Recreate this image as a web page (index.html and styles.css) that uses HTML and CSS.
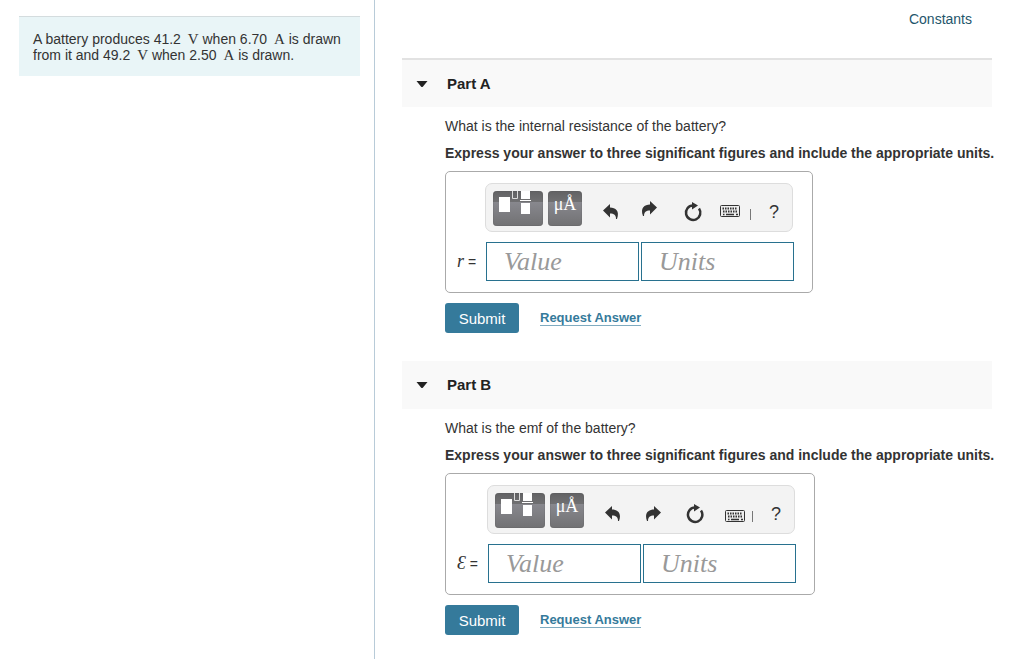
FILE: index.html
```html
<!DOCTYPE html>
<html lang="en">
<head>
  <meta charset="UTF-8">
  <title>Battery Problem</title>
  <link rel="stylesheet" href="styles.css">
</head>
<body>

  <aside class="sidebar">
    <div class="problem">
      A battery produces 41.2 <span class="unit">V</span> when 6.70 <span class="unit">A</span> is drawn from it and 49.2 <span class="unit">V</span> when 2.50 <span class="unit">A</span> is drawn.
    </div>
  </aside>

  <main class="content">
    <div class="top-links"><a href="#">Constants</a></div>

    <section class="part">
      <h2 class="part-header first"><svg class="arrow" width="12" height="6"><path d="M0.5 0H11.5L7 5.5Q6 6.5 5 5.5Z"/></svg>Part A</h2>
      <div class="part-body">
        <p>What is the internal resistance of the battery?</p>
        <p class="instructions">Express your answer to three significant figures and include the appropriate units.</p>

        <div class="answer-box">
          <div class="toolbar">
            <button class="dark template" aria-label="Templates">
              <svg width="50" height="35"><path fill="#fff" d="M6 6h11v15H6zM28 0h9v8h-9zM28 12h9v11h-9zM27 9h11v1H27z"/><path fill="none" stroke="#ddd" d="M19.5 0v7.5h5V0"/></svg>
            </button>
            <button class="dark units">μÅ</button>
            <button class="tool" aria-label="Undo">
              <svg width="40" height="35"><path d="M12 19.5L19 13V16.5C24.5 16.5 29 20 26 28H25C25 24 23 22.5 19 22.5V26.5Z"/></svg>
            </button>
            <button class="tool" aria-label="Redo">
              <svg width="40" height="35"><path d="M25 16.5L18 10V13.5C12.5 13.5 8 17 11 25H12C12 21 14 19.5 18 19.5V23.5Z"/></svg>
            </button>
            <button class="tool" aria-label="Reset">
              <svg width="40" height="35"><path fill="none" stroke="#333" stroke-width="2.5" d="M20 14.5A7.2 7.2 0 1 0 26 17.5"/><path d="M19 11L25 14.5L19 18.5Z"/></svg>
            </button>
            <button class="tool keyboard" aria-label="Keyboard shortcuts">
              <svg width="30" height="35"><rect x="4.5" y="14.5" width="19" height="11" rx="1" fill="#eee" stroke="#333"/><path fill="none" stroke="#333" stroke-width="2" stroke-dasharray="1.5 1" d="M6.5 17.5h15M7 20.5h15"/><path stroke="#333" stroke-width="1.5" d="M7 23.5h1.5M10 23.5h8M20 23.5h2"/></svg>
            </button>
            <span class="divider"></span>
            <button class="tool help" aria-label="Help">?</button>
          </div>
          <label class="symbol" for="valueA"><i>r</i> =</label>
          <div class="fields">
            <input type="text" id="valueA" placeholder="Value">
            <input type="text" placeholder="Units" aria-label="Units">
          </div>
        </div>

        <div class="actions">
          <button class="submit">Submit</button>
          <a href="#">Request Answer</a>
        </div>
      </div>
    </section>

    <section class="part">
      <h2 class="part-header"><svg class="arrow" width="12" height="6"><path d="M0.5 0H11.5L7 5.5Q6 6.5 5 5.5Z"/></svg>Part B</h2>
      <div class="part-body">
        <p>What is the emf of the battery?</p>
        <p class="instructions">Express your answer to three significant figures and include the appropriate units.</p>

        <div class="answer-box emf">
          <div class="toolbar">
            <button class="dark template" aria-label="Templates">
              <svg width="50" height="35"><path fill="#fff" d="M6 6h11v15H6zM28 0h9v8h-9zM28 12h9v11h-9zM27 9h11v1H27z"/><path fill="none" stroke="#ddd" d="M19.5 0v7.5h5V0"/></svg>
            </button>
            <button class="dark units">μÅ</button>
            <button class="tool" aria-label="Undo">
              <svg width="40" height="35"><path d="M12 19.5L19 13V16.5C24.5 16.5 29 20 26 28H25C25 24 23 22.5 19 22.5V26.5Z"/></svg>
            </button>
            <button class="tool" aria-label="Redo">
              <svg width="40" height="35"><path d="M27 19.5L20 13V16.5C14.5 16.5 10 20 13 28H14C14 24 16 22.5 20 22.5V26.5Z"/></svg>
            </button>
            <button class="tool" aria-label="Reset">
              <svg width="40" height="35"><path fill="none" stroke="#333" stroke-width="2.5" d="M20 14.5A7.2 7.2 0 1 0 26 17.5"/><path d="M19 11L25 14.5L19 18.5Z"/></svg>
            </button>
            <button class="tool keyboard" aria-label="Keyboard shortcuts">
              <svg width="30" height="35"><rect x="7.5" y="17.5" width="19" height="11" rx="1" fill="#eee" stroke="#333"/><path fill="none" stroke="#333" stroke-width="2" stroke-dasharray="1.5 1" d="M9.5 20.5h15M10 23.5h15"/><path stroke="#333" stroke-width="1.5" d="M10 26.5h1.5M13 26.5h8M23 26.5h2"/></svg>
            </button>
            <span class="divider"></span>
            <button class="tool help" aria-label="Help">?</button>
          </div>
          <label class="symbol" for="valueB"><i>Ɛ</i> =</label>
          <div class="fields">
            <input type="text" id="valueB" placeholder="Value">
            <input type="text" placeholder="Units" aria-label="Units">
          </div>
        </div>

        <div class="actions">
          <button class="submit">Submit</button>
          <a href="#">Request Answer</a>
        </div>
      </div>
    </section>
  </main>

</body>
</html>
```
FILE: styles.css
```css
* {
  box-sizing: border-box;
}
body {
  font-family: "Liberation Sans", Arial, sans-serif;
  font-size: 14px;
  line-height: 16px;
  margin: 0;
  display: flex;
  min-height: 100vh;
  color: #333;
  background: #fff;
}
button {
  font-family: inherit;
  border: none;
  padding: 0;
  cursor: pointer;
}
.sidebar {
  width: 375px;
  flex-shrink: 0;
  padding: 16px 14px 0 19px;
  border-right: 1px solid #b8cbd8;
}
.problem {
  background: #e9f5f7;
  border-top: 1px solid #d4dcde;
  padding: 14px 6px 13px 14px;
}
.unit {
  font-family: "Liberation Serif", serif;
  font-size: 15px;
  line-height: 1;
  margin-left: 3px;
}
.content {
  flex: 1;
  min-width: 0;
  padding: 0 32px 0 27px;
}
.top-links {
  height: 58px;
  padding: 11px 20px 0;
  text-align: right;
}
.top-links a {
  color: #1f566b;
  text-decoration: none;
}
.part {
  margin-bottom: 28px;
}
.part-header {
  display: flex;
  align-items: center;
  gap: 19px;
  height: 48px;
  margin: 0;
  padding-left: 14px;
  font-size: 15px;
  color: #222;
  background: #f9f9f9;
}
.part-header.first {
  height: 49px;
  border-top: 2px solid #e2e2e2;
}
.arrow {
  fill: #222;
}
.part-body {
  padding: 11px 0 0 43px;
}
p {
  margin: 0 0 11px;
}
.instructions {
  font-weight: bold;
  margin-bottom: 10px;
  white-space: nowrap;
}
.answer-box {
  display: inline-grid;
  grid-template-columns: 28px auto;
  row-gap: 10px;
  align-items: center;
  padding: 11px 18px 11px 11px;
  border: 1px solid #aaa;
  border-radius: 5px;
  vertical-align: top;
}
.answer-box.emf {
  grid-template-columns: 30px auto;
}
.toolbar {
  grid-column: 2;
  display: flex;
  width: 308px;
  height: 49px;
  padding: 7px;
  background: #f3f3f3;
  border: 1px solid #ddd;
  border-radius: 7px;
}
.toolbar > * {
  flex-shrink: 0;
}
.dark {
  height: 35px;
  border-radius: 4px;
  overflow: hidden;
  color: #fff;
  background: linear-gradient(#626264 0, #707072 11px, #88888e 11px, #717173 100%);
  box-shadow: inset 0 0 1px #444;
}
.template {
  width: 50px;
  margin-right: 5px;
}
.units {
  width: 34px;
  margin-right: 9px;
  padding-bottom: 10px;
  font-family: "Liberation Serif", serif;
  font-size: 18px;
  line-height: 24px;
}
.tool {
  width: 40px;
  height: 35px;
  margin-right: 1px;
  background: none;
}
.tool svg,
.dark svg {
  display: block;
}
.tool svg {
  fill: #333;
}
.keyboard {
  width: 30px;
}
.tool.keyboard {
  margin-left: 2px;
}
.divider {
  width: 1px;
  height: 11px;
  margin: 18px 13px 0 3px;
  background: #777;
}
.tool.help {
  width: 20px;
  padding-top: 7px;
  font-size: 18px;
  color: #333;
}
.symbol i {
  font-family: "Liberation Serif", serif;
  font-size: 18px;
}
.fields {
  display: flex;
  gap: 2px;
  padding-left: 1px;
}
.fields input {
  width: 153px;
  height: 39px;
  padding: 0 17px;
  border: 1px solid #28718f;
  border-radius: 0;
  font-family: "Liberation Serif", serif;
  font-size: 26px;
}
.fields input::placeholder {
  color: #999;
  font-style: italic;
}
.actions {
  display: flex;
  align-items: center;
  gap: 21px;
  margin-top: 10px;
}
.submit {
  width: 74px;
  height: 30px;
  color: #fff;
  background: #357a9b;
  border-radius: 3px;
  font-size: 15px;
}
.actions a {
  color: #357a9b;
  font-weight: bold;
  font-size: 13px;
  line-height: 14px;
  text-decoration: none;
  border-bottom: 1px solid #7fabc0;
}
```
